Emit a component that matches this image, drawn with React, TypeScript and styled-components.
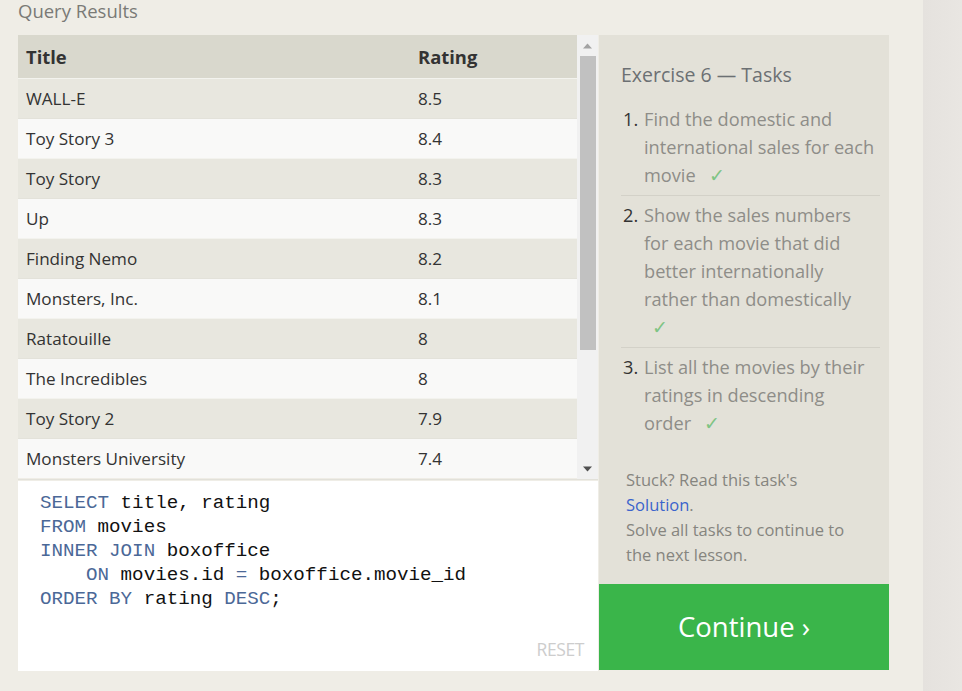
import React from "react";
import styled, { createGlobalStyle } from "styled-components";

const Global = createGlobalStyle`
  html, body { margin: 0; padding: 0; }
  body {
    background: #efede6;
    font-family: "Open Sans", "Noto Sans", sans-serif;
    width: 962px;
    height: 691px;
    overflow: hidden;
  }
`;

const Page = styled.div`
  display: flex;
  height: 691px;
`;

const Main = styled.div`
  width: 923px;
  display: flex;
  flex-direction: column;
  padding-left: 18px;
  box-sizing: border-box;
`;

const SideStrip = styled.div`
  flex: 1;
  background: linear-gradient(to right, #e5e2de, #e9e6e2);
`;

const Heading = styled.div`
  font-size: 18.5px;
  color: #7a7a76;
  height: 35px;
  line-height: 24px;
  margin-top: -1px;
  margin-bottom: 1px;
`;

const Columns = styled.div`
  display: flex;
`;

const LeftCol = styled.div`
  width: 580px;
  display: flex;
  flex-direction: column;
`;

const TableWrap = styled.div`
  display: flex;
  height: 444px;
  border-bottom: 1px solid #e2e1da;
`;

const Table = styled.div`
  width: 559px;
  display: flex;
  flex-direction: column;
`;

const HeaderRow = styled.div`
  display: flex;
  height: 43px;
  align-items: center;
  background: #d9d8cd;
  font-weight: 700;
  color: #333;
  font-size: 18.4px;
`;

const Row = styled.div<{ $alt: boolean }>`
  display: flex;
  height: 39px;
  align-items: center;
  background: ${(p) => (p.$alt ? "#e8e7df" : "#f9f9f8")};
  border-top: 1px solid ${(p) => (p.$alt ? "#f3f3ee" : "#e3e2da")};
  color: #333;
  font-size: 17.1px;
`;

const TitleCell = styled.div`
  width: 392px;
  padding-left: 8px;
`;

const RatingCell = styled.div`
  flex: 1;
`;

const Scrollbar = styled.div`
  width: 21px;
  background: #f1f1f1;
  display: flex;
  flex-direction: column;
  align-items: center;
`;

const ArrowBox = styled.div`
  height: 21px;
  width: 100%;
  display: flex;
  align-items: center;
  justify-content: center;
`;

const Thumb = styled.div`
  width: 16px;
  height: 294px;
  background: #c1c1c1;
`;

const Track = styled.div`
  flex: 1;
`;

const Editor = styled.div`
  background: #fff;
  height: 190px;
  margin-top: 1px;
  display: flex;
  flex-direction: column;
  padding: 10px 14px 12px 22px;
  box-sizing: border-box;
`;

const Code = styled.pre`
  margin: 0;
  font-family: "Liberation Mono", "DejaVu Sans Mono", monospace;
  font-size: 19.2px;
  line-height: 24px;
  color: #111;
  flex: 1;
`;

const Kw = styled.span`
  color: #4b6897;
`;

const Reset = styled.div`
  align-self: flex-end;
  font-size: 17.5px;
  color: #cdcdcd;
  letter-spacing: -0.4px;
  line-height: 20px;
`;

const RightCol = styled.div`
  width: 290px;
  margin-left: 1px;
  display: flex;
  flex-direction: column;
`;

const TaskPanel = styled.div`
  background: #e3e1d8;
  height: 549px;
  padding: 28px 9px 0 22px;
  box-sizing: border-box;
  display: flex;
  flex-direction: column;
`;

const PanelTitle = styled.div`
  font-size: 19.5px;
  color: #6c7073;
  line-height: 24px;
  margin-bottom: 18px;
`;

const TaskList = styled.ol`
  margin: 0;
  padding: 0;
  list-style: none;
`;

const Task = styled.li<{ $last?: boolean }>`
  display: flex;
  font-size: 18.2px;
  line-height: 28.2px;
  padding-bottom: 5px;
  margin-bottom: 5px;
  border-bottom: ${(p) => (p.$last ? "none" : "1px solid #d3d1c8")};
`;

const Num = styled.span`
  width: 21px;
  flex: none;
  color: #333;
  padding-left: 2px;
`;

const TaskText = styled.span`
  color: #8e8d88;
`;

const Check = styled.span<{ $block?: boolean }>`
  color: #7fc484;
  margin-left: 13px;
  font-size: 19px;
  ${(p) => (p.$block ? "display:block; margin-left: 8px;" : "")}
`;

const Stuck = styled.div`
  margin-top: auto;
  margin-bottom: 17px;
  padding-left: 5px;
  font-size: 16.5px;
  line-height: 25px;
  color: #86857f;
`;

const Link = styled.span`
  color: #3b64cc;
`;

const ContinueButton = styled.div`
  background: #3ab54a;
  height: 86px;
  display: flex;
  align-items: center;
  justify-content: center;
  color: #fff;
  font-size: 27.5px;
  padding-bottom: 2px;
  box-sizing: border-box;
`;

const rows: [string, string][] = [
  ["WALL-E", "8.5"],
  ["Toy Story 3", "8.4"],
  ["Toy Story", "8.3"],
  ["Up", "8.3"],
  ["Finding Nemo", "8.2"],
  ["Monsters, Inc.", "8.1"],
  ["Ratatouille", "8"],
  ["The Incredibles", "8"],
  ["Toy Story 2", "7.9"],
  ["Monsters University", "7.4"],
];

const Arrow = ({ up }: { up: boolean }) => (
  <svg width="9" height="6" viewBox="0 0 9 6">
    <path d={up ? "M0 5.5 L4.5 0.5 L9 5.5 Z" : "M0 0.5 L4.5 5.5 L9 0.5 Z"} fill={up ? "#a3a3a3" : "#505050"} />
  </svg>
);

export default function App() {
  return (
    <>
      <Global />
      <Page>
        <Main>
          <Heading>Query Results</Heading>
          <Columns>
            <LeftCol>
              <TableWrap>
                <Table>
                  <HeaderRow>
                    <TitleCell>Title</TitleCell>
                    <RatingCell>Rating</RatingCell>
                  </HeaderRow>
                  {rows.map(([t, r], i) => (
                    <Row key={t} $alt={i % 2 === 0}>
                      <TitleCell>{t}</TitleCell>
                      <RatingCell>{r}</RatingCell>
                    </Row>
                  ))}
                </Table>
                <Scrollbar>
                  <ArrowBox>
                    <Arrow up />
                  </ArrowBox>
                  <Thumb />
                  <Track />
                  <ArrowBox>
                    <Arrow up={false} />
                  </ArrowBox>
                </Scrollbar>
              </TableWrap>
              <Editor>
                <Code>
                  <Kw>SELECT</Kw> title, rating{"\n"}
                  <Kw>FROM</Kw> movies{"\n"}
                  <Kw>INNER JOIN</Kw> boxoffice{"\n"}
                  {"    "}<Kw>ON</Kw> movies.id <Kw>=</Kw> boxoffice.movie_id{"\n"}
                  <Kw>ORDER BY</Kw> rating <Kw>DESC</Kw>;
                </Code>
                <Reset>RESET</Reset>
              </Editor>
            </LeftCol>
            <RightCol>
              <TaskPanel>
                <PanelTitle>Exercise 6 — Tasks</PanelTitle>
                <TaskList>
                  <Task>
                    <Num>1.</Num>
                    <TaskText>
                      Find the domestic and<br />
                      international sales for each<br />
                      movie<Check>✓</Check>
                    </TaskText>
                  </Task>
                  <Task>
                    <Num>2.</Num>
                    <TaskText>
                      Show the sales numbers<br />
                      for each movie that did<br />
                      better internationally<br />
                      rather than domestically
                      <Check $block>✓</Check>
                    </TaskText>
                  </Task>
                  <Task $last>
                    <Num>3.</Num>
                    <TaskText>
                      List all the movies by their<br />
                      ratings in descending<br />
                      order<Check>✓</Check>
                    </TaskText>
                  </Task>
                </TaskList>
                <Stuck>
                  Stuck? Read this task's<br />
                  <Link>Solution</Link>.<br />
                  Solve all tasks to continue to<br />
                  the next lesson.
                </Stuck>
              </TaskPanel>
              <ContinueButton>Continue ›</ContinueButton>
            </RightCol>
          </Columns>
        </Main>
        <SideStrip />
      </Page>
    </>
  );
}
